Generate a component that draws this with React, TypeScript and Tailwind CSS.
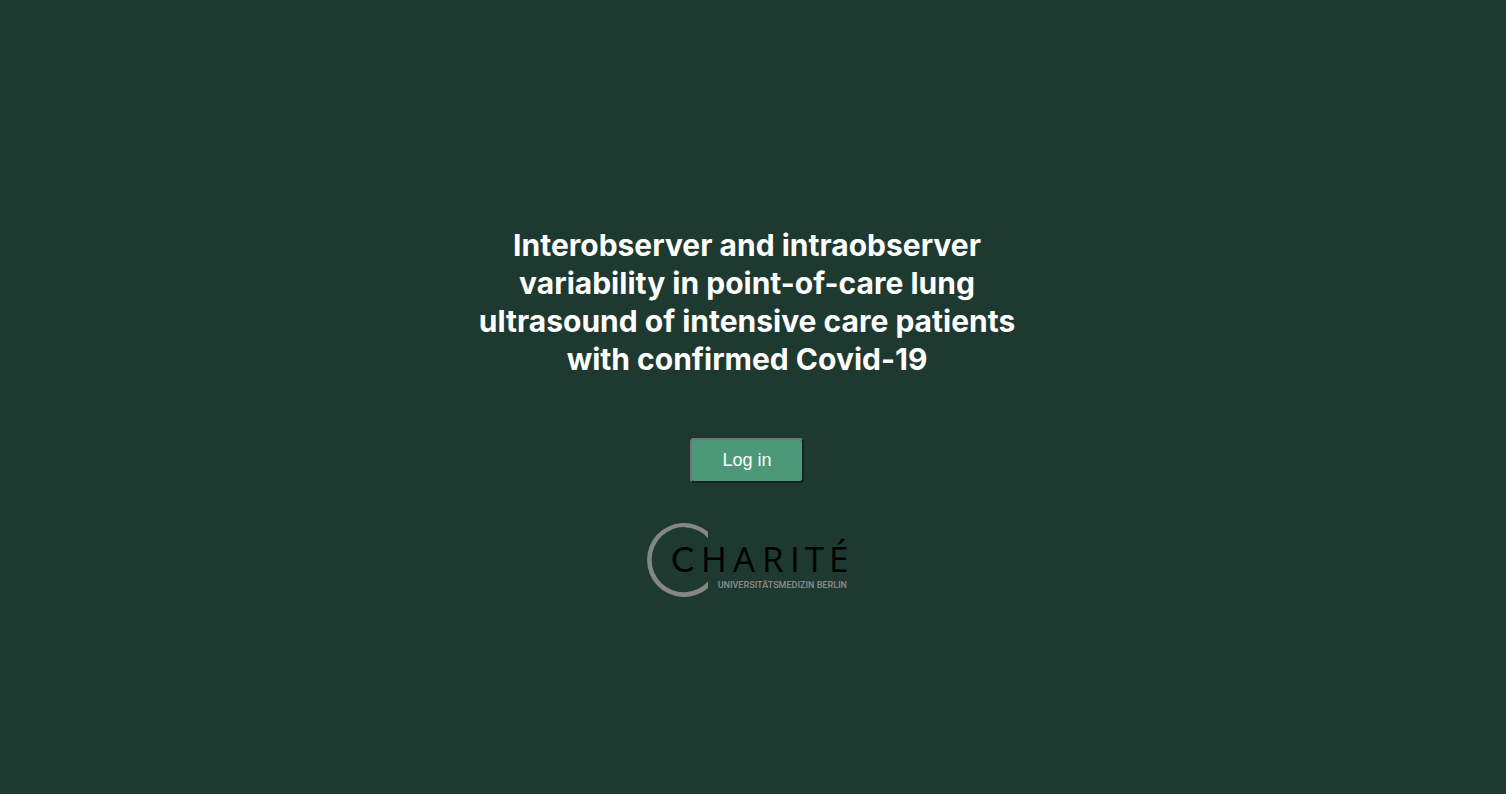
function ChariteLogo() {
  return (
    <svg
      width="200"
      height="74"
      viewBox="0 0 200 74"
      role="img"
      aria-label="Charité Universitätsmedizin Berlin"
      className="overflow-visible"
    >
      <path
        d="M61 8.8A37 37 0 1 0 61 65.2V58.2A32.2 32.6 0 1 1 61 15.2Z"
        fill="#858785"
      />
      <text
        x="24 54 86 115 143 158 182"
        y="49"
        fill="#000000"
        className="font-['Open_Sans',sans-serif] text-[35px]"
      >
        <tspan className="font-['Lato',sans-serif]">C</tspan>HARITÉ
      </text>
      <text
        x="200"
        y="65"
        textAnchor="end"
        fill="#858785"
        className="font-['Roboto',sans-serif] text-[9px] font-semibold"
      >
        UNIVERSITÄTSMEDIZIN BERLIN
      </text>
    </svg>
  );
}

export default function App() {
  return (
    <main className="flex min-h-screen flex-col items-center justify-center bg-[#1e3a30] pt-7 pr-3">
      <h1 className="max-w-[560px] text-center font-['Inter',sans-serif] text-[30px] leading-[38px] font-bold text-white">
        Interobserver and intraobserver variability in point-of-care lung
        ultrasound of intensive care patients with confirmed Covid-19
      </h1>
      <button
        type="button"
        className="mt-15 mb-10 rounded-[4px] border-2 border-t-[#767676] border-r-[#16211d] border-b-[#16211d] border-l-[#767676] bg-[#4c9878] px-[30px] py-2 font-['Liberation_Sans',sans-serif] text-[18px] leading-[25px] text-white"
      >
        Log in
      </button>
      <ChariteLogo />
    </main>
  );
}
